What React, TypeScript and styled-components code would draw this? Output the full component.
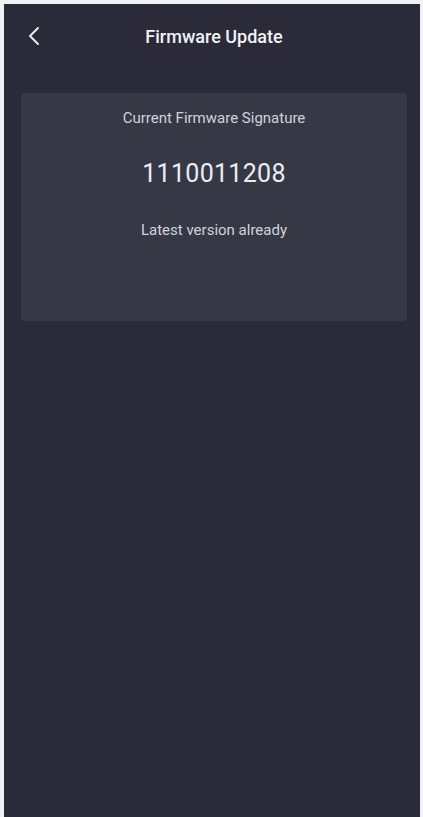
import React from "react";
import styled, { createGlobalStyle } from "styled-components";

const Global = createGlobalStyle`
  html, body { margin: 0; padding: 0; background: #f2f2f4; }
  body { font-family: Roboto, "Noto Sans", sans-serif; }
`;

const Page = styled.div`
  padding: 4px 3px 0 4px;
  height: 817px;
  box-sizing: border-box;
`;

const Screen = styled.div`
  background: #2a2a38;
  height: 100%;
  display: flex;
  flex-direction: column;
  padding: 0 13px 0 17px;
  box-sizing: border-box;
`;

const Header = styled.header`
  height: 64px;
  display: grid;
  grid-template-columns: 40px 1fr 40px;
  align-items: center;
`;

const BackButton = styled.button`
  background: none;
  border: 0;
  padding: 0;
  margin-left: 6px;
  color: #e8e8ee;
  display: flex;
  align-items: center;
  cursor: pointer;
`;

const Title = styled.h1`
  margin: 0;
  text-align: center;
  color: #f2f2f6;
  font-size: 18px;
  font-weight: 500;
`;

const Card = styled.section`
  margin-top: 25px;
  background: #363846;
  border-radius: 3px;
  height: 228px;
  display: flex;
  flex-direction: column;
  align-items: center;
  padding-top: 16px;
  box-sizing: border-box;
`;

const Label = styled.div<{ $top?: number }>`
  color: #d2d2da;
  font-size: 15px;
  margin-top: ${(p) => p.$top ?? 0}px;
`;

const Signature = styled.div`
  color: #ececf2;
  font-size: 25px;
  letter-spacing: 0.3px;
  margin-top: 32px;
`;

export default function App() {
  return (
    <>
      <Global />
      <Page>
        <Screen>
          <Header>
            <BackButton aria-label="Back">
              <svg width="14" height="20" viewBox="0 0 14 20" fill="none">
                <path d="M11 2 L3 10 L11 18" stroke="currentColor" strokeWidth="2" strokeLinecap="round" strokeLinejoin="round" />
              </svg>
            </BackButton>
            <Title>Firmware Update</Title>
            <span />
          </Header>
          <Card>
            <Label>Current Firmware Signature</Label>
            <Signature>1110011208</Signature>
            <Label $top={33}>Latest version already</Label>
          </Card>
        </Screen>
      </Page>
    </>
  );
}
